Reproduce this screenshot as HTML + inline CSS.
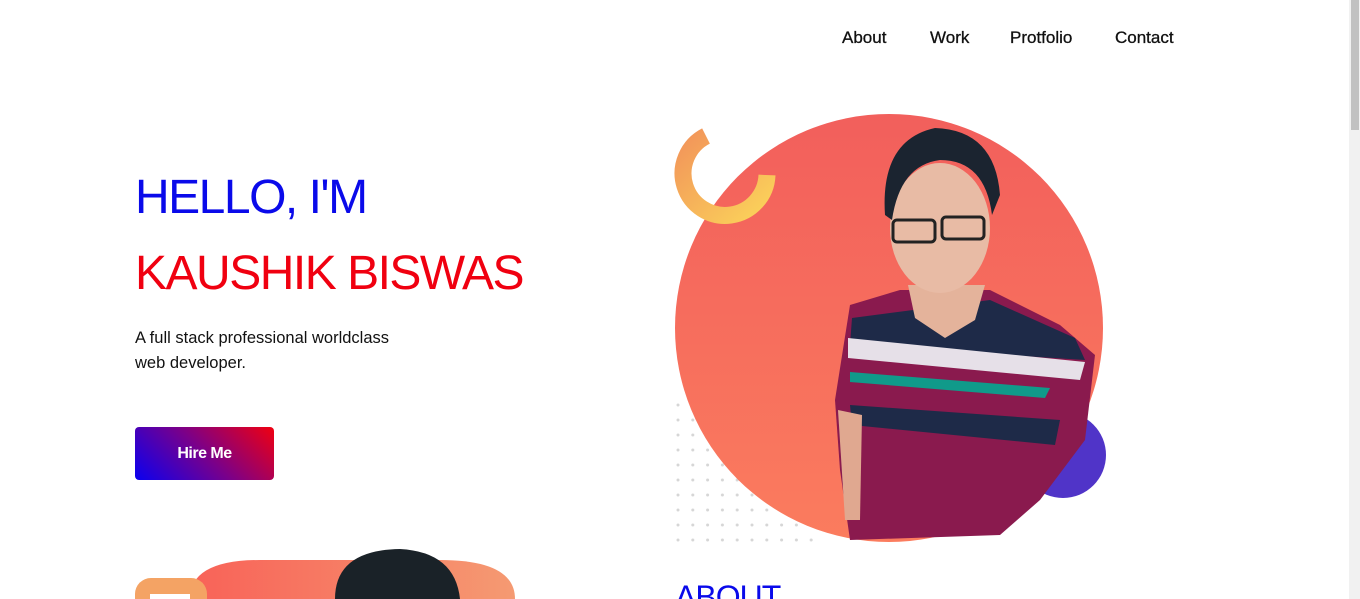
<!DOCTYPE html>
<html><head><meta charset="utf-8"><style>
*{margin:0;padding:0;box-sizing:border-box}
html,body{width:1360px;height:599px;overflow:hidden}
body{background:#fff;font-family:"Liberation Sans",sans-serif;position:relative}
.nav a{position:absolute;top:28px;font-size:17px;color:#111;text-decoration:none;-webkit-text-stroke:0.3px #111}
h1{position:absolute;font-weight:400;left:135px;white-space:nowrap}
.sb{position:absolute;right:0;top:0;width:11px;height:599px;background:#f1f1f1}
.sb div{position:absolute;left:2px;top:0;width:8px;height:130px;background:#c1c1c1}
</style></head><body>
<div class="nav"><a style="left:842px">About</a><a style="left:930px">Work</a><a style="left:1010px">Protfolio</a><a style="left:1115px">Contact</a></div>
<h1 style="top:170px;font-size:48px;color:#0a0aea;letter-spacing:-1.5px">HELLO, I'M</h1>
<h1 style="top:246px;font-size:48px;color:#f00010;letter-spacing:-1.5px">KAUSHIK BISWAS</h1>
<p style="position:absolute;left:135px;top:326px;font-size:16.5px;line-height:25px;color:#111">A full stack professional worldclass<br>web developer.</p>
<div style="position:absolute;left:135px;top:427px;width:139px;height:53px;border-radius:4px;background:linear-gradient(225deg,#f00010,#7a008a 50%,#0a00f0);color:#fff;font-weight:700;font-size:16px;text-align:center;line-height:53px;letter-spacing:-0.5px">Hire Me</div>
<svg style="position:absolute;left:0;top:0" width="1349" height="599">
<defs>
<linearGradient id="c" x1="0" y1="0" x2="0" y2="1"><stop offset="0" stop-color="#f25f5c"/><stop offset="1" stop-color="#fb7c5e"/></linearGradient>
<linearGradient id="y" x1="0" y1="0" x2="1" y2="1"><stop offset="0" stop-color="#f2955a"/><stop offset="1" stop-color="#fbd35a"/></linearGradient>
<linearGradient id="p" x1="0" y1="0" x2="1" y2="0"><stop offset="0" stop-color="#f86258"/><stop offset="1" stop-color="#f59a72"/></linearGradient>
<pattern id="d" x="676" y="403" width="14.8" height="15" patternUnits="userSpaceOnUse"><circle cx="2" cy="2" r="1.5" fill="#d6d6d6"/></pattern>
</defs>
<rect x="675" y="403" width="140" height="142" fill="url(#d)"/>
<circle cx="1063" cy="455" r="43" fill="#5034c8"/>
<circle cx="889" cy="328" r="214" fill="url(#c)"/>
<path d="M706 136 A42 42 0 1 0 767 175" fill="none" stroke="url(#y)" stroke-width="17"/>
<path d="M850 305 L900 290 L990 290 L1060 325 L1095 355 L1085 440 L1040 500 L1000 535 L850 540 L840 470 L835 400 Z" fill="#8a1a4e"/>
<path d="M852 318 L990 300 L1075 338 L1085 360 L850 345 Z" fill="#1e2a48"/>
<path d="M848 338 L1085 362 L1080 380 L848 358 Z" fill="#e6e0e8"/>
<path d="M850 372 L1050 388 L1045 398 L850 382 Z" fill="#109a8a"/>
<path d="M850 405 L1060 420 L1055 445 L852 425 Z" fill="#1e2a48"/>
<path d="M908 285 L985 285 L975 320 L945 338 L915 318 Z" fill="#e4b39b"/>
<path d="M838 410 L862 415 L860 520 L845 520 Z" fill="#e0a890"/>
<ellipse cx="940" cy="228" rx="50" ry="65" fill="#e8bba5"/>
<path d="M885 215 Q880 140 935 128 Q995 130 1000 195 L992 215 Q985 160 940 160 Q900 165 892 220 Z" fill="#1b2430"/>
<rect x="893" y="220" width="42" height="22" rx="4" fill="none" stroke="#222" stroke-width="3"/>
<rect x="942" y="217" width="42" height="22" rx="4" fill="none" stroke="#222" stroke-width="3"/>
<path d="M190 599 Q190 560 260 560 L440 560 Q515 560 515 599 Z" fill="url(#p)"/>
<path d="M335 599 Q335 550 400 549 Q455 552 460 599 Z" fill="#1a2228"/>
<rect x="135" y="578" width="72" height="60" rx="16" fill="#f4a364"/>
<rect x="150" y="594" width="40" height="10" fill="#fff"/>
<text x="675" y="608" font-size="32" fill="#0a0aea" font-family="Liberation Sans" letter-spacing="-1">ABOUT</text>
</svg>
<div class="sb"><div></div></div>
</body></html>
